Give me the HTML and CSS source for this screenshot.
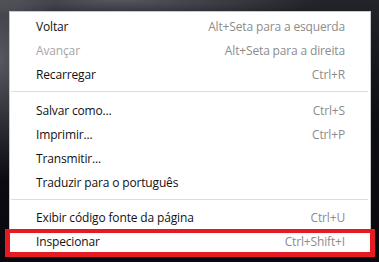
FILE: index.html
```html
<!DOCTYPE html>
<html lang="pt-BR">
<head>
<meta charset="utf-8">
<link rel="stylesheet" href="styles.css">
</head>
<body>
<div class="stage">
  <div class="menu">
    <div class="item"><span class="label">Voltar</span><span class="key">Alt+Seta para a esquerda</span></div>
    <div class="item disabled"><span class="label">Avançar</span><span class="key">Alt+Seta para a direita</span></div>
    <div class="item"><span class="label">Recarregar</span><span class="key">Ctrl+R</span></div>
    <div class="sep"></div>
    <div class="item"><span class="label">Salvar como...</span><span class="key">Ctrl+S</span></div>
    <div class="item"><span class="label">Imprimir...</span><span class="key">Ctrl+P</span></div>
    <div class="item"><span class="label">Transmitir...</span><span class="key"></span></div>
    <div class="item"><span class="label">Traduzir para o português</span><span class="key"></span></div>
    <div class="sep sep2"></div>
    <div class="item"><span class="label">Exibir código fonte da página</span><span class="key">Ctrl+U</span></div>
    <div class="item highlight"><span class="label">Inspecionar</span><span class="key">Ctrl+Shift+I</span></div>
  </div>
</div>
</body>
</html>
```
FILE: styles.css
```css
html, body {
  margin: 0;
  padding: 0;
}
body {
  width: 379px;
  height: 262px;
  overflow: hidden;
  background:
    radial-gradient(ellipse 60px 120px at 0px 60px, rgba(140,140,150,0.55), rgba(0,0,0,0) 100%),
    radial-gradient(ellipse 200px 20px at 120px 0px, rgba(120,120,130,0.6), rgba(0,0,0,0) 100%),
    linear-gradient(180deg, #23232a 0%, #0d0d14 45%, #08080d 100%);
  font-family: "Open Sans", "Liberation Sans", sans-serif;
}
.stage {
  padding: 11px 0 0 9px;
}
.menu {
  width: 360px;
  background: #ffffff;
  border: 1px solid #c8c8c8;
  border-bottom: none;
  padding-top: 2px;
}
.item {
  height: 24px;
  display: flex;
  align-items: center;
  justify-content: space-between;
  padding: 0 25px 0 26px;
  font-size: 12px;
  letter-spacing: -0.15px;
  color: #111111;
}
.item .key {
  color: #8c8c8c;
}
.item.disabled .label {
  color: #a6a6a6;
}
.sep {
  height: 1px;
  background: #dcdcdc;
  margin: 5px 2px 6px 1px;
}
.sep.sep2 {
  margin-bottom: 5px;
}
.highlight {
  position: relative;
}
.highlight::after {
  content: "";
  position: absolute;
  left: -5px;
  top: 0;
  width: 360px;
  height: 19px;
  border: 5px solid #e41b23;
  border-top-width: 4px;
}
```
